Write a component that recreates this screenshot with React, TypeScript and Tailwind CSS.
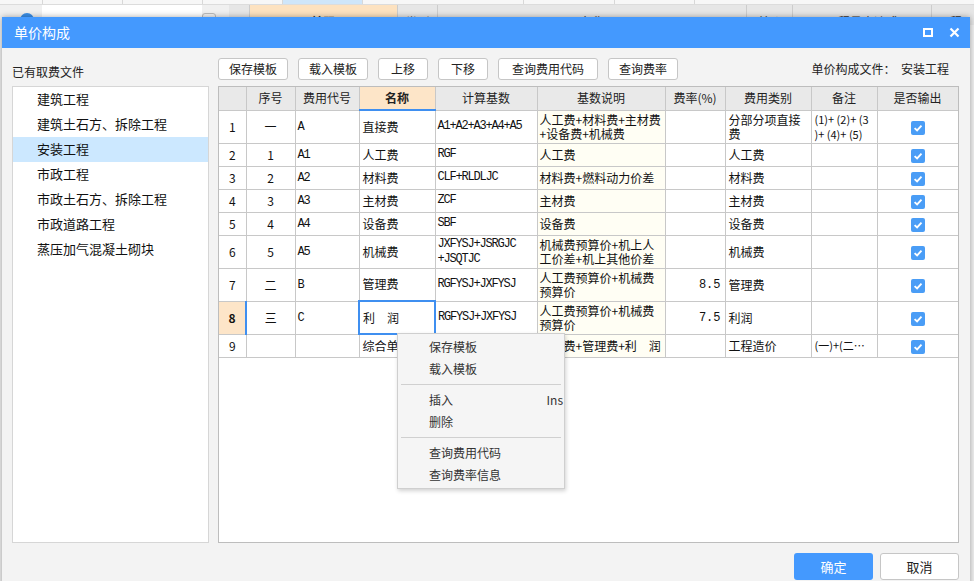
import React from 'react'

const ui = { fontFamily: '"Noto Sans CJK SC", "Liberation Sans", sans-serif' }
const mono = { fontFamily: '"Liberation Mono", "Noto Sans CJK SC", monospace' }

// 取费文件列表
const feeFiles = ['建筑工程', '建筑土石方、拆除工程', '安装工程', '市政工程', '市政土石方、拆除工程', '市政道路工程', '蒸压加气混凝土砌块']

type Row = {
  n: number
  seq: string
  code: string
  name: string
  base: string[]
  desc: string
  rate: string
  type: string
  note: string[]
  h: 'tall' | 'short'
}

const rows: Row[] = [
  { n: 1, seq: '一', code: 'A', name: '直接费', base: ['A1+A2+A3+A4+A5'], desc: '人工费+材料费+主材费+设备费+机械费', rate: '', type: '分部分项直接费', note: ['(1)+ (2)+ (3', ')+ (4)+ (5)'], h: 'tall' },
  { n: 2, seq: '1', code: 'A1', name: '人工费', base: ['RGF'], desc: '人工费', rate: '', type: '人工费', note: [], h: 'short' },
  { n: 3, seq: '2', code: 'A2', name: '材料费', base: ['CLF+RLDLJC'], desc: '材料费+燃料动力价差', rate: '', type: '材料费', note: [], h: 'short' },
  { n: 4, seq: '3', code: 'A3', name: '主材费', base: ['ZCF'], desc: '主材费', rate: '', type: '主材费', note: [], h: 'short' },
  { n: 5, seq: '4', code: 'A4', name: '设备费', base: ['SBF'], desc: '设备费', rate: '', type: '设备费', note: [], h: 'short' },
  { n: 6, seq: '5', code: 'A5', name: '机械费', base: ['JXFYSJ+JSRGJC', '+JSQTJC'], desc: '机械费预算价+机上人工价差+机上其他价差', rate: '', type: '机械费', note: [], h: 'tall' },
  { n: 7, seq: '二', code: 'B', name: '管理费', base: ['RGFYSJ+JXFYSJ'], desc: '人工费预算价+机械费预算价', rate: '8.5', type: '管理费', note: [], h: 'tall' },
  { n: 8, seq: '三', code: 'C', name: '利　润', base: ['RGFYSJ+JXFYSJ'], desc: '人工费预算价+机械费预算价', rate: '7.5', type: '利润', note: [], h: 'tall' },
  { n: 9, seq: '', code: '', name: '综合单价', base: [], desc: '直接费+管理费+利　润', rate: '', type: '工程造价', note: ['(一)+(二…'], h: 'short' },
]

function Check() {
  return (
    <span className="inline-flex w-[14px] h-[14px] rounded-[2px] bg-[#4a9df6] items-center justify-center align-middle">
      <svg width="10" height="10" viewBox="0 0 10 10">
        <path d="M1.6 5.1 L4.1 7.4 L8.5 2.7" fill="none" stroke="#fff" strokeWidth="1.9" />
      </svg>
    </span>
  )
}

function Lines({ items }: { items: string[] }) {
  return (
    <>
      {items.map((t, i) => (
        <div key={i} className="leading-[15px] whitespace-nowrap">{t}</div>
      ))}
    </>
  )
}

function ToolButton({ label, w }: { label: string; w: string }) {
  return (
    <button className={`${w} h-[22px] bg-white border border-[#c6c6c6] rounded-[3px] text-[12px] text-[#222] flex items-center justify-center`}>
      {label}
    </button>
  )
}

export default function App() {
  return (
    <div className="relative w-[974px] h-[581px] overflow-hidden bg-[#f0f0f0]" style={ui}>
      {/* 背后的主窗口 */}
      <div className="flex h-[5px] bg-[#f7f7f7] border-b border-[#dcdcdc]">
        <div className="w-[43px] border-r border-[#d8d8d8]" />
        <div className="w-[80px] border-r border-[#d8d8d8]" />
        <div className="w-[80px] border-r border-[#d8d8d8]" />
        <div className="w-[80px] border-r border-[#d8d8d8]" />
        <div className="w-[80px] border-r border-[#d8d8d8] bg-[#cfe6fa]" />
        <div className="w-[161px] border-r border-[#d8d8d8]" />
        <div className="w-[91px] border-r border-[#d8d8d8]" />
        <div className="w-[80px] border-r border-[#d8d8d8]" />
        <div className="flex-1" />
      </div>
      <div className="flex h-[20px] text-[12px] text-[#333]">
        <div className="w-[42px] flex justify-end items-end">
          <span className="w-[14px] h-[14px] rounded-full bg-[#3b8fe8] mr-[8px] -mb-[2px]" />
        </div>
        <div className="w-[160px] bg-white" />
        <div className="w-[14px] h-[10px] mt-[8px] border border-[#bbb] rounded-[3px] bg-[#f3f3f3]" />
        <div className="w-[13px]" />
        <div className="w-[21px] bg-[#e6e6e6] border-r border-[#ccc]" />
        <div className="w-[148px] bg-[#fde2c0] border-r border-[#ccc] text-center pt-[8px] font-bold">编码</div>
        <div className="w-[40px] bg-[#e6e6e6] border-r border-[#ccc] text-center pt-[8px]">类别</div>
        <div className="w-[309px] bg-[#e6e6e6] border-r border-[#ccc] text-center pt-[8px]">名称</div>
        <div className="w-[46px] bg-[#e6e6e6] border-r border-[#ccc] text-center pt-[8px]">单价</div>
        <div className="w-[139px] bg-[#e6e6e6] border-r border-[#ccc] text-center pt-[8px]">工程量表达式</div>
        <div className="flex-1 bg-[#e6e6e6] pt-[8px] pl-[6px]">工程</div>
      </div>

      {/* 单价构成 对话框 */}
      <div className="absolute left-[2px] top-[17px] w-[968px] h-[570px] bg-[#f3f3f3] shadow-[0_0_6px_rgba(0,0,0,0.35)] flex flex-col">
        <div className="h-[31px] bg-[#4499fe] flex items-center pl-[12px] pr-[10px]">
          <span className="text-[14px] text-white">单价构成</span>
          <div className="ml-auto flex items-center gap-[16px]">
            <span className="w-[10px] h-[9px] border-2 border-white" />
            <svg width="11" height="11" viewBox="0 0 11 11">
              <path d="M1.5 1.5 L9.5 9.5 M9.5 1.5 L1.5 9.5" stroke="#fff" strokeWidth="2.2" />
            </svg>
          </div>
        </div>

        <div className="flex pl-[10px] pt-[10px]">
          {/* 左侧 */}
          <div className="w-[197px] flex flex-col">
            <div className="h-[28px] flex items-center text-[12px] text-[#222]">已有取费文件</div>
            <div className="h-[457px] bg-white border border-[#d6d6d6] text-[13px] text-[#111]">
              {feeFiles.map((f) => (
                <div key={f} className={`h-[25px] flex items-center pl-[24px] pb-[2px] ${f === '安装工程' ? 'bg-[#cce8ff]' : ''}`}>
                  {f}
                </div>
              ))}
            </div>
          </div>

          {/* 右侧 */}
          <div className="w-[741px] ml-[9px] flex flex-col">
            <div className="h-[22px] flex items-center gap-[10px]">
              <ToolButton label="保存模板" w="w-[70px]" />
              <ToolButton label="载入模板" w="w-[70px]" />
              <ToolButton label="上移" w="w-[50px]" />
              <ToolButton label="下移" w="w-[50px]" />
              <ToolButton label="查询费用代码" w="w-[100px]" />
              <ToolButton label="查询费率" w="w-[70px]" />
              <span className="ml-auto mr-[10px] text-[12px] text-[#222]">单价构成文件：&nbsp;&nbsp;安装工程</span>
            </div>

            <div className="mt-[6px] h-[457px] bg-white border border-[#bdbdbd] overflow-hidden">
              <table className="border-collapse table-fixed w-[739px] text-[12px] text-[#111]">
                <colgroup>
                  <col className="w-[27px]" />
                  <col className="w-[49px]" />
                  <col className="w-[64px]" />
                  <col className="w-[76px]" />
                  <col className="w-[102px]" />
                  <col className="w-[128px]" />
                  <col className="w-[60px]" />
                  <col className="w-[86px]" />
                  <col className="w-[66px]" />
                  <col className="w-[81px]" />
                </colgroup>
                <thead>
                  <tr className="h-[23px] bg-[#e9e9e9] text-[#222]">
                    <th className="border border-[#c8c8c8] border-t-0 border-l-0 font-normal" />
                    <th className="border border-[#c8c8c8] border-t-0 font-normal">序号</th>
                    <th className="border border-[#c8c8c8] border-t-0 font-normal">费用代号</th>
                    <th className="border border-[#c8c8c8] border-t-0 border-b-2 border-b-[#3f8ff0] bg-[#fde5c8] font-bold">名称</th>
                    <th className="border border-[#c8c8c8] border-t-0 font-normal">计算基数</th>
                    <th className="border border-[#c8c8c8] border-t-0 font-normal">基数说明</th>
                    <th className="border border-[#c8c8c8] border-t-0 font-normal">费率(%)</th>
                    <th className="border border-[#c8c8c8] border-t-0 font-normal">费用类别</th>
                    <th className="border border-[#c8c8c8] border-t-0 font-normal">备注</th>
                    <th className="border border-[#c8c8c8] border-t-0 font-normal">是否输出</th>
                  </tr>
                </thead>
                <tbody>
                  {rows.map((r) => {
                    const cur = r.n === 8
                    return (
                      <tr key={r.n} className={r.h === 'tall' ? 'h-[33px]' : 'h-[23px]'}>
                        <td className={`border border-[#c8c8c8] border-l-0 text-center ${cur ? 'bg-[#fde5c8] font-bold border-r-2 border-r-[#3f8ff0]' : ''}`}>{r.n}</td>
                        <td className="border border-[#c8c8c8] text-center">{r.seq}</td>
                        <td className="border border-[#c8c8c8] px-[2px] tracking-[-1.2px]" style={mono}>{r.code}</td>
                        <td className={`border px-[3px] whitespace-nowrap ${cur ? 'border-2 border-[#3f8ff0]' : 'border-[#c8c8c8]'}`}>{r.name}</td>
                        <td className="border border-[#c8c8c8] px-[2px] tracking-[-1.2px]" style={mono}>
                          <Lines items={r.base} />
                        </td>
                        <td className="border border-[#c8c8c8] bg-[#fffef4] px-[2px] leading-[14px]">{r.desc}</td>
                        <td className="border border-[#c8c8c8] text-right pr-[4px]" style={mono}>{r.rate}</td>
                        <td className="border border-[#c8c8c8] px-[3px] leading-[14px]">{r.type}</td>
                        <td className="border border-[#c8c8c8] px-[3px] text-[11px]">
                          <Lines items={r.note} />
                        </td>
                        <td className="border border-[#c8c8c8] text-center">
                          <Check />
                        </td>
                      </tr>
                    )
                  })}
                </tbody>
              </table>
            </div>
          </div>
        </div>

        <div className="flex justify-end gap-[7px] pr-[11px] mt-[10px]">
          <button className="w-[79px] h-[27px] bg-[#4499fe] rounded-[3px] text-[13px] text-white">确定</button>
          <button className="w-[79px] h-[27px] bg-white border border-[#c6c6c6] rounded-[3px] text-[13px] text-[#222]">取消</button>
        </div>
      </div>

      {/* 右键菜单 */}
      <div className="absolute left-[397px] top-[333px] w-[168px] bg-[#f5f5f5] border border-[#cfcfcf] shadow-[1px_2px_4px_rgba(0,0,0,0.18)] py-[2px] text-[12px] text-[#333]">
        <div className="h-[22px] flex items-center pl-[31px]">保存模板</div>
        <div className="h-[22px] flex items-center pl-[31px]">载入模板</div>
        <div className="h-[9px] flex items-center px-[3px]"><div className="h-px w-full bg-[#d0d0d0]" /></div>
        <div className="h-[22px] flex items-center pl-[31px] pr-[1px]">
          插入<span className="ml-auto">Ins</span>
        </div>
        <div className="h-[22px] flex items-center pl-[31px]">删除</div>
        <div className="h-[9px] flex items-center px-[3px]"><div className="h-px w-full bg-[#d0d0d0]" /></div>
        <div className="h-[22px] flex items-center pl-[31px]">查询费用代码</div>
        <div className="h-[22px] flex items-center pl-[31px]">查询费率信息</div>
      </div>
    </div>
  )
}
